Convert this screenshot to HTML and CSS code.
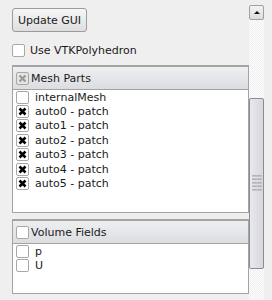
FILE: index.html
```html
<!DOCTYPE html>
<html lang="en">
<head>
    <meta charset="UTF-8">
    <title>Properties</title>
    <link rel="stylesheet" href="styles.css">
</head>
<body>
    <div class="page">
        <div class="main">
            <button class="push-button">Update GUI</button>

            <label class="check-row">
                <span class="box"></span>
                <span>Use VTKPolyhedron</span>
            </label>

            <div class="panel mesh-panel">
                <div class="panel-header">
                    <span class="box partial">
                        <svg width="11" height="11" viewBox="0 0 11 11"><path d="M2.5 2.5 L8.5 8.5 M8.5 2.5 L2.5 8.5" stroke="#9a9a9a" stroke-width="2.2"/></svg>
                    </span>
                    <span>Mesh Parts</span>
                </div>
                <ul class="item-list">
                    <li><span class="box"></span>internalMesh</li>
                    <li><span class="box checked"></span>auto0 - patch</li>
                    <li><span class="box checked"></span>auto1 - patch</li>
                    <li><span class="box checked"></span>auto2 - patch</li>
                    <li><span class="box checked"></span>auto3 - patch</li>
                    <li><span class="box checked"></span>auto4 - patch</li>
                    <li><span class="box checked"></span>auto5 - patch</li>
                </ul>
            </div>

            <div class="panel field-panel">
                <div class="panel-header">
                    <span class="box"></span>
                    <span>Volume Fields</span>
                </div>
                <ul class="item-list short">
                    <li><span class="box"></span>p</li>
                    <li><span class="box"></span>U</li>
                </ul>
            </div>
        </div>

        <div class="scrollbar">
            <div class="arrow-up"></div>
            <div class="track top-track"></div>
            <div class="thumb">
                <div class="grip"></div>
            </div>
            <div class="track"></div>
        </div>
    </div>
</body>
</html>
```

FILE: styles.css
```css
body {
    margin: 0;
    background-color: #efefef;
    font-family: "DejaVu Sans", sans-serif;
    font-size: 11px;
    color: #1a1a1a;
    overflow: hidden;
}
.page {
    display: flex;
    height: 300px;
}
.main {
    width: 237px;
    padding-left: 12px;
    padding-top: 8px;
    box-sizing: content-box;
}
.push-button {
    display: block;
    width: 75px;
    height: 24px;
    padding: 0;
    font-family: inherit;
    font-size: 11px;
    color: #1a1a1a;
    border: 1px solid #9c9c9c;
    border-radius: 3px;
    background: linear-gradient(#f6f6f6, #dedede);
}
.check-row {
    display: flex;
    align-items: center;
    gap: 5px;
    margin-top: 12px;
    height: 13px;
}
.box {
    flex: none;
    width: 11px;
    height: 11px;
    border: 1px solid #a8a8a8;
    border-radius: 2px;
    background: #fff;
    display: flex;
    align-items: center;
    justify-content: center;
}
.box.checked {
    background: #fff url("data:image/svg+xml,%3Csvg xmlns='http://www.w3.org/2000/svg' width='11' height='11'%3E%3Cpath d='M2.5 2.5 L8.5 8.5 M8.5 2.5 L2.5 8.5' stroke='black' stroke-width='2.6'/%3E%3C/svg%3E") no-repeat center;
}
.box.partial {
    background: #e4e4e4;
}
.panel {
    border: 1px solid #a3a3a3;
    background: #fff;
}
.mesh-panel {
    margin-top: 8px;
    height: 146px;
}
.field-panel {
    margin-top: 6px;
    height: 73px;
}
.panel-header {
    display: flex;
    align-items: center;
    gap: 2px;
    height: 22px;
    padding-left: 3px;
    border-top: 1px solid #a3a3a3;
    border-bottom: 1px solid #a3a3a3;
    background: linear-gradient(#eeeff1, #dcdde1);
}
.item-list {
    list-style: none;
    margin: 0;
    padding: 0 0 0 3px;
}
.item-list li {
    display: flex;
    align-items: center;
    gap: 6px;
    height: 14.4px;
}
.item-list.short li {
    height: 14px;
}
.scrollbar {
    width: 15px;
    margin-top: 5px;
    display: flex;
    flex-direction: column;
}
.arrow-up {
    border: 1px solid #a0a0a0;
    border-radius: 2px;
    box-sizing: border-box;
    height: 15px;
    background: linear-gradient(#f4f4f4, #dcdcdc);
    position: relative;
}
.arrow-up::after {
    content: "";
    position: absolute;
    left: 4px;
    top: 5px;
    border-left: 3px solid transparent;
    border-right: 3px solid transparent;
    border-bottom: 3px solid #111;
}
.track {
    flex: 1;
    background: repeating-conic-gradient(#f2f2f2 0 25%, #fbfbfb 0 50%) 0 0 / 2px 2px;
}
.top-track {
    flex: none;
    height: 78px;
}
.thumb {
    height: 171px;
    box-sizing: border-box;
    border: 1px solid #8c8c8c;
    border-radius: 2px;
    background: linear-gradient(90deg, #e8e9ed, #d6d8dd);
    padding-top: 75px;
}
.grip {
    width: 10px;
    height: 17px;
    margin: 0 auto;
    background: radial-gradient(circle, #a8a8a8 0.8px, transparent 1.2px) 0 0 / 2.5px 3.5px;
}
```
